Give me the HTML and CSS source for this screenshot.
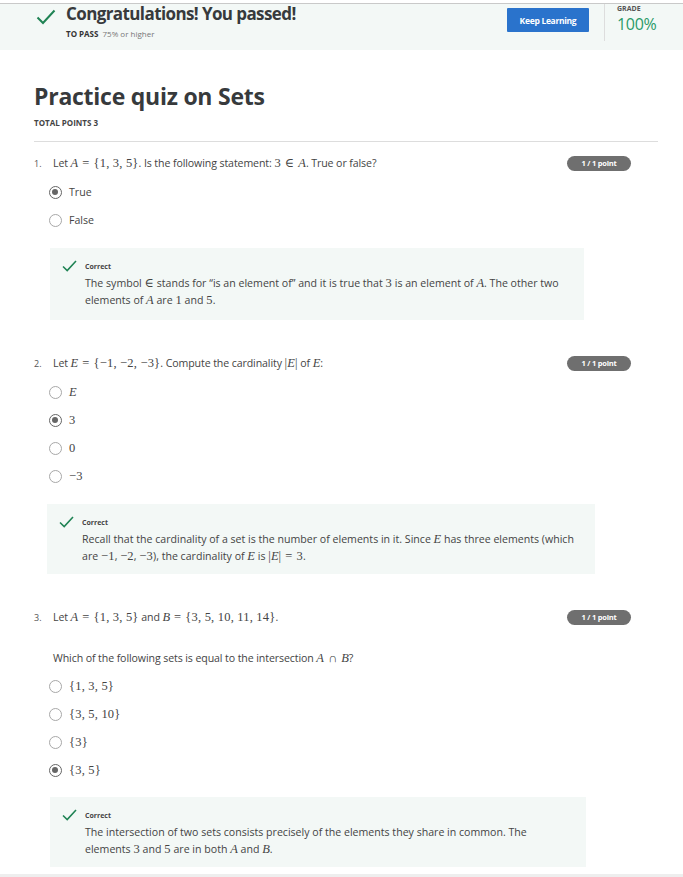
FILE: index.html
```html
<!DOCTYPE html>
<html>
<head>
<meta charset="utf-8">
<link rel="stylesheet" href="styles.css">
</head>
<body>
<header class="banner">
  <svg class="banner-check" width="20" height="16" viewBox="0 0 20 16"><path d="M1.5 8.5 L7 14 L18.5 1.5" fill="none" stroke="#1f8354" stroke-width="2"/></svg>
  <div class="banner-text">
    <div class="banner-title">Congratulations! You passed!</div>
    <div class="banner-sub"><b>TO PASS</b> 75% or higher</div>
  </div>
  <button class="keep">Keep Learning</button>
  <div class="grade">
    <div class="grade-label">GRADE</div>
    <div class="grade-value">100%</div>
  </div>
</header>

<main class="page">
  <h1 class="title">Practice quiz on Sets</h1>
  <div class="total">TOTAL POINTS 3</div>
  <hr class="sep">

  <section class="q q1">
    <div class="q-head">
      <span class="q-num">1.</span>
      <span class="q-text">Let <i class="m">A</i><span class="mr op">=</span><span class="mr">{1, 3, 5}</span>. Is the following statement: <span class="mr">3</span><span class="mr op">∈</span><i class="m">A</i>. True or false?</span>
      <span class="badge">1 / 1 point</span>
    </div>
    <div class="opts">
      <div class="opt"><span class="radio on"></span><span>True</span></div>
      <div class="opt"><span class="radio"></span><span>False</span></div>
    </div>
    <div class="fb fb1">
      <div class="fb-head">
        <svg class="fb-check" width="15" height="12" viewBox="0 0 15 12"><path d="M1 6.5 L5.2 10.5 L14 1" fill="none" stroke="#1f8354" stroke-width="1.6"/></svg>
        <span class="fb-label">Correct</span>
      </div>
      <p class="fb-text">The symbol <span class="mr">∈</span> stands for “is an element of” and it is true that <span class="mr">3</span> is an element of <i class="m">A</i>. The other two elements of <i class="m">A</i> are <span class="mr">1</span> and <span class="mr">5</span>.</p>
    </div>
  </section>

  <section class="q q2">
    <div class="q-head">
      <span class="q-num">2.</span>
      <span class="q-text">Let <i class="m">E</i><span class="mr op">=</span><span class="mr">{−1, −2, −3}</span>. Compute the cardinality <span class="mr">|</span><i class="m">E</i><span class="mr">|</span> of <i class="m">E</i>:</span>
      <span class="badge">1 / 1 point</span>
    </div>
    <div class="opts">
      <div class="opt"><span class="radio"></span><i class="m">E</i></div>
      <div class="opt"><span class="radio on"></span><span class="mr">3</span></div>
      <div class="opt"><span class="radio"></span><span class="mr">0</span></div>
      <div class="opt"><span class="radio"></span><span class="mr">−3</span></div>
    </div>
    <div class="fb fb2">
      <div class="fb-head">
        <svg class="fb-check" width="15" height="12" viewBox="0 0 15 12"><path d="M1 6.5 L5.2 10.5 L14 1" fill="none" stroke="#1f8354" stroke-width="1.6"/></svg>
        <span class="fb-label">Correct</span>
      </div>
      <p class="fb-text">Recall that the cardinality of a set is the number of elements in it. Since <i class="m">E</i> has three elements (which are <span class="mr">−1</span>, <span class="mr">−2</span>, <span class="mr">−3</span>), the cardinality of <i class="m">E</i> is <span class="mr">|</span><i class="m">E</i><span class="mr">|</span><span class="mr op">=</span><span class="mr">3</span>.</p>
    </div>
  </section>

  <section class="q q3">
    <div class="q-head">
      <span class="q-num">3.</span>
      <span class="q-text">Let <i class="m">A</i><span class="mr op">=</span><span class="mr">{1, 3, 5}</span> and <i class="m">B</i><span class="mr op">=</span><span class="mr">{3, 5, 10, 11, 14}</span>.</span>
      <span class="badge">1 / 1 point</span>
    </div>
    <p class="q-sub">Which of the following sets is equal to the intersection <i class="m">A</i><span class="mr op">∩</span><i class="m">B</i>?</p>
    <div class="opts">
      <div class="opt"><span class="radio"></span><span class="mr">{1, 3, 5}</span></div>
      <div class="opt"><span class="radio"></span><span class="mr">{3, 5, 10}</span></div>
      <div class="opt"><span class="radio"></span><span class="mr">{3}</span></div>
      <div class="opt"><span class="radio on"></span><span class="mr">{3, 5}</span></div>
    </div>
    <div class="fb fb3">
      <div class="fb-head">
        <svg class="fb-check" width="15" height="12" viewBox="0 0 15 12"><path d="M1 6.5 L5.2 10.5 L14 1" fill="none" stroke="#1f8354" stroke-width="1.6"/></svg>
        <span class="fb-label">Correct</span>
      </div>
      <p class="fb-text">The intersection of two sets consists precisely of the elements they share in common. The elements <span class="mr">3</span> and <span class="mr">5</span> are in both <i class="m">A</i> and <i class="m">B</i>.</p>
    </div>
  </section>
</main>
<div class="bottom"></div>
</body>
</html>
```

FILE: styles.css
```css
* { box-sizing: border-box; }
html, body { margin: 0; padding: 0; background: #fff; }
body {
  padding-top: 3px;
  font-family: "Open Sans", "DejaVu Sans", sans-serif;
  color: #333;
  height: 877px;
  overflow: hidden;
  position: relative;
}

.banner {
  border-top: 1px solid #c9c9c9;
  background: #f3f8f6;
  height: 47px;
  display: flex;
  align-items: flex-start;
  padding-left: 36px;
}
.banner-check { margin-top: 5px; flex: none; }
.banner-text { margin-left: 10px; flex: 1; }
.banner-title {
  font-size: 17px;
  font-weight: 700;
  color: #373a3c;
  letter-spacing: -0.6px;
  line-height: 20px;
}
.banner-sub {
  font-size: 8px;
  color: #777;
  margin-top: 4px;
}
.banner-sub b { color: #333; margin-right: 2px; }
.keep {
  margin-top: 4px;
  width: 82px;
  height: 24px;
  background: #2a73cc;
  color: #fff;
  border: 0;
  border-radius: 1px;
  font-family: "Open Sans", sans-serif;
  font-weight: 700;
  font-size: 8.5px;
  letter-spacing: -0.3px;
  padding: 0;
}
.grade {
  margin-left: 15px;
  border-left: 1px solid #ddd;
  height: 37px;
  padding-left: 12px;
  width: 79px;
}
.grade-label {
  font-size: 7px;
  font-weight: 700;
  color: #555;
  margin-top: 1px;
  line-height: 8px;
}
.grade-value {
  font-size: 16px;
  color: #2a9a68;
  line-height: 18px;
  margin-top: 2px;
  letter-spacing: -0.3px;
}

.page { padding: 0 25px 0 34px; }
.title {
  margin: 31px 0 0;
  font-size: 23px;
  font-weight: 700;
  color: #373a3c;
  letter-spacing: -0.25px;
  line-height: 30px;
}
.total {
  font-size: 8px;
  font-weight: 700;
  color: #444;
  margin-top: 6px;
}
.sep { border: 0; border-top: 1px solid #ddd; margin: 13px 0 0; }

.q { font-size: 10.6px; color: #444; }
.q-head {
  display: flex;
  align-items: center;
  margin-top: 13px;
  height: 16px;
}
.q2 .q-head { margin-top: 35px; }
.q3 .q-head { margin-top: 35px; }
.q-num { width: 19px; font-size: 9px; color: #555; }
.q-text { flex: 1; letter-spacing: -0.1px; white-space: nowrap; }
.badge {
  background: #6f6f6f;
  color: #fff;
  font-weight: 700;
  font-size: 7.5px;
  border-radius: 8px;
  width: 64px;
  height: 15px;
  line-height: 15px;
  text-align: center;
  margin-right: 27px;
  letter-spacing: -0.2px;
}
.m { font-family: "Liberation Serif", "DejaVu Serif", serif; font-style: italic; font-size: 12.5px; letter-spacing: 0; line-height: 1; }
.mr { font-family: "Liberation Serif", "DejaVu Serif", serif; font-size: 12.5px; letter-spacing: 0.2px; line-height: 1; }
.op { margin: 0 4px; }

.q-sub { margin: 26px 0 0 19px; letter-spacing: -0.1px; }

.opts { margin-top: 7px; padding-left: 15px; }
.opt {
  display: flex;
  align-items: center;
  gap: 7px;
  height: 28px;
}
.radio {
  width: 13px; height: 13px;
  border: 1px solid #a8a8a8;
  border-radius: 50%;
  flex: none;
  position: relative;
}
.radio.on { border: 1.5px solid #666; }
.radio.on::after {
  content: "";
  position: absolute;
  left: 2px; top: 2px;
  width: 6px; height: 6px;
  border-radius: 50%;
  background: #666;
}

.fb {
  background: #f3f8f6;
  margin-top: 14px;
  padding: 12px 10px 10px 12px;
}
.fb1 { margin-left: 16px; width: 534px; height: 72px; }
.fb2 { margin-left: 13px; width: 548px; height: 70px; margin-top: 14px; }
.fb3 { margin-left: 16px; width: 536px; height: 70px; margin-top: 13px; }
.fb-head { display: flex; align-items: center; }
.fb-check { flex: none; }
.fb-label { font-size: 7px; font-weight: 700; color: #444; margin-left: 8px; }
.fb-text {
  margin: 3px 0 0 23px;
  font-size: 10.6px;
  line-height: 17px;
  color: #444;
}
.fb1 .fb-text { max-width: 495px; }
.fb2 .fb-text { max-width: 508px; }
.fb3 .fb-text { max-width: 470px; }

.bottom {
  position: absolute;
  left: 0; right: 0; bottom: 0;
  height: 3px;
  background: #eee;
}
```
